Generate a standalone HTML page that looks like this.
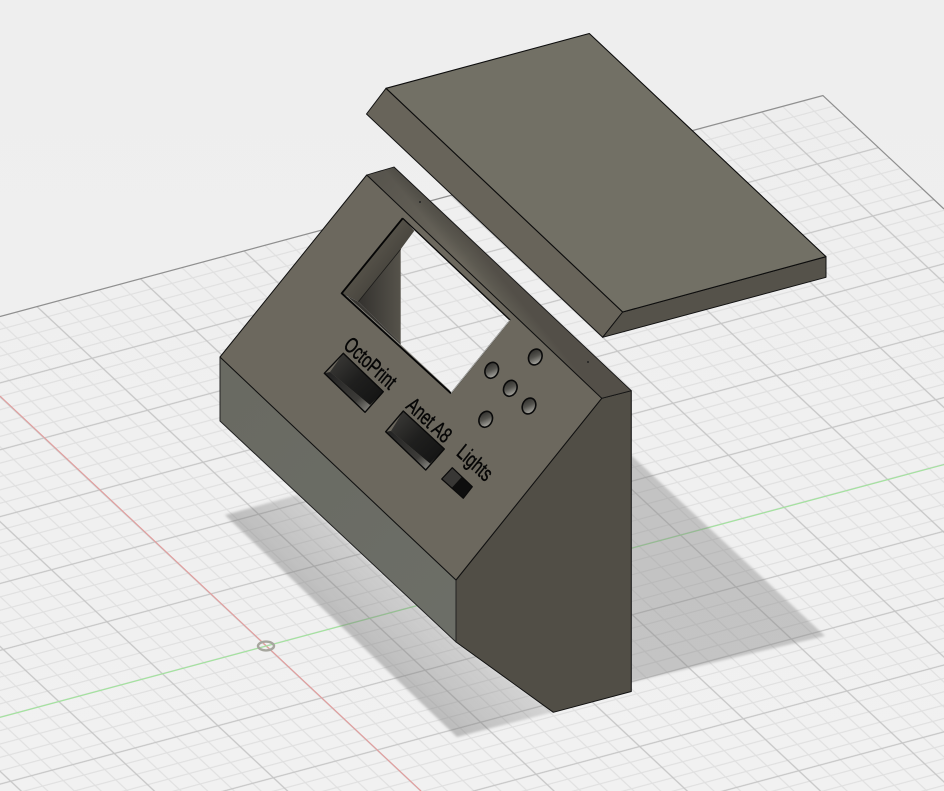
<!DOCTYPE html>
<html>
<head>
<meta charset="utf-8">
<style>
html,body{margin:0;padding:0;background:#efefef;width:944px;height:791px;overflow:hidden}
svg{display:block}
text{font-family:"Liberation Sans",sans-serif;font-size:16px;fill:#060606;stroke:#060606;stroke-width:.35px}
</style>
</head>
<body>
<svg width="944" height="791" viewBox="0 0 944 791" xmlns="http://www.w3.org/2000/svg">
<defs>
<linearGradient id="bg" x1="0" y1="0" x2="0" y2="1"><stop offset="0" stop-color="#eeeeee"/><stop offset="1" stop-color="#f1f1f1"/></linearGradient>
<pattern id="grid" patternUnits="userSpaceOnUse" width="100" height="100" patternTransform="matrix(1.036 -.2775 -.555 -.52 266 646)">
<g fill="#e0e0e0">
<rect x="19.35" y="0" width="1.3" height="100"/><rect x="39.35" y="0" width="1.3" height="100"/><rect x="59.35" y="0" width="1.3" height="100"/><rect x="79.35" y="0" width="1.3" height="100"/>
<rect x="0" y="19.1" width="100" height="1.8"/><rect x="0" y="39.1" width="100" height="1.8"/><rect x="0" y="59.1" width="100" height="1.8"/><rect x="0" y="79.1" width="100" height="1.8"/>
</g>
<g fill="#c6c6c6">
<rect x="0" y="0" width=".7" height="100"/><rect x="99.3" y="0" width=".7" height="100"/>
<rect x="0" y="0" width="100" height=".95"/><rect x="0" y="99.05" width="100" height=".95"/>
</g>
</pattern>
<linearGradient id="shL" gradientUnits="userSpaceOnUse" x1="335" y1="625" x2="405" y2="550"><stop offset="0" stop-color="#777" stop-opacity=".44"/><stop offset="1" stop-color="#777" stop-opacity=".2"/></linearGradient>
<filter id="bl" x="-5%" y="-5%" width="110%" height="110%"><feGaussianBlur stdDeviation="1.4"/></filter>
<linearGradient id="strip" gradientUnits="userSpaceOnUse" x1="480" y1="286" x2="497" y2="272"><stop offset="0" stop-color="#6a665c"/><stop offset=".45" stop-color="#5d5a51"/><stop offset="1" stop-color="#534f48"/></linearGradient>
<linearGradient id="stripL" gradientUnits="userSpaceOnUse" x1="385" y1="172" x2="470" y2="255"><stop offset="0" stop-color="#222" stop-opacity=".25"/><stop offset="1" stop-color="#222" stop-opacity="0"/></linearGradient>
<linearGradient id="wall" gradientUnits="userSpaceOnUse" x1="360" y1="250" x2="385" y2="270"><stop offset="0" stop-color="#5c584e"/><stop offset="1" stop-color="#49463f"/></linearGradient>
<linearGradient id="tri" gradientUnits="userSpaceOnUse" x1="358" y1="300" x2="401" y2="300"><stop offset="0" stop-color="#33312e"/><stop offset="1" stop-color="#56534b"/></linearGradient>
<linearGradient id="rock" x1="0" y1="0" x2="1" y2="1"><stop offset="0" stop-color="#3e3d3a"/><stop offset=".5" stop-color="#1f1f1e"/><stop offset="1" stop-color="#121212"/></linearGradient>
<linearGradient id="wedge" x1="0" y1="0" x2="1" y2="1"><stop offset="0" stop-color="#222"/><stop offset=".7" stop-color="#3c3b38"/><stop offset="1" stop-color="#8f8e88"/></linearGradient>
<linearGradient id="hole" x1="0.1" y1="0.1" x2="0.8" y2="0.9"><stop offset="0" stop-color="#2d2c29"/><stop offset=".5" stop-color="#55544f"/><stop offset="1" stop-color="#aaa9a3"/></linearGradient>
<linearGradient id="lowf" gradientUnits="userSpaceOnUse" x1="220" y1="390" x2="456" y2="610"><stop offset="0" stop-color="#696a62"/><stop offset="1" stop-color="#6c6e67"/></linearGradient>
</defs>

<rect width="944" height="791" fill="url(#bg)"/>

<polygon points="0,316.5 822.9,95.5 944,209 944,791 0,791" fill="url(#grid)"/>
<line x1="0" y1="396" x2="421" y2="791" stroke="#e39c9c" stroke-width="1.1"/>
<line x1="0" y1="717.3" x2="944" y2="464.6" stroke="#a2e59d" stroke-width="1.1"/>
<polyline points="0,316.5 822.9,95.5 944,209" fill="none" stroke="#8f8f8f" stroke-width="1.2"/>

<!-- shadows -->
<g filter="url(#bl)">
<polygon points="225,515 297,495 456,642 553,712 457,737" fill="url(#shL)"/>
<polygon points="631,455 825,636 631,682 560,700" fill="#808080" fill-opacity=".4"/>
</g>

<!-- origin marker -->
<ellipse cx="266" cy="646" rx="8" ry="4.4" fill="none" stroke="#a6a69e" stroke-width="2.4"/>

<!-- LID -->
<polygon points="366.5,114 386,88.3 622.7,312 602.7,337.3" fill="#68645a" stroke="#111" stroke-width="1" stroke-linejoin="round"/>
<polygon points="602.7,337.3 622.7,312 826,256.7 826,277.3" fill="#55524a" stroke="#111" stroke-width="1" stroke-linejoin="round"/>
<polygon points="386,88.3 589.3,33.5 826,256.7 622.7,312" fill="#727065" stroke="#0d0d0d" stroke-width="1.1" stroke-linejoin="round"/>

<!-- BOX side and lower front -->
<polygon points="601.7,398.3 631.3,390.7 631.3,691.5 553.3,712.3 456,642 456,580" fill="#514e46" stroke="#111" stroke-width="1" stroke-linejoin="round"/>
<polygon points="220,357 456,580 456,642 220,421" fill="url(#lowf)" stroke="#222" stroke-width="1" stroke-linejoin="round"/>

<!-- top strip -->
<polygon points="366.7,175 394,167 631.3,390.7 601.7,398.3" fill="url(#strip)"/>
<polygon points="366.7,175 394,167 631.3,390.7 601.7,398.3" fill="url(#stripL)" stroke="#151515" stroke-width=".9" stroke-linejoin="round"/>
<circle cx="420" cy="202" r="1" fill="#222"/>
<circle cx="588" cy="362" r="1" fill="#222"/>

<!-- slanted face with window hole -->
<path fill-rule="evenodd" d="M220,357L366.7,175L601.7,398.3L456,580ZM341.7,293.3L402.7,218.3L510,320L451,393.3Z" fill="#6c685e" stroke="#111" stroke-width="1" stroke-linejoin="round"/>

<!-- window interior -->
<polygon points="402.7,218.3 414.3,230.7 400.7,249.3 358.3,301.7 341.7,293.3" fill="url(#wall)"/>
<polygon points="400.7,249.3 400.7,343.3 358.3,301.7" fill="url(#tri)"/>
<polygon points="341.7,293.3 358.3,301.7 400.7,343.3 400.7,348 346,298" fill="#3a3834"/>
<line x1="358.3" y1="301.7" x2="400.7" y2="249.3" stroke="#1c1b19" stroke-width=".8"/>
<polygon points="344,295.5 451,393.3 449.5,390 400.7,344.5 347,296" fill="#8a8880"/>
<polyline points="451,393.3 341.7,293.3 402.7,218.3" fill="none" stroke="#060606" stroke-width="1.9" stroke-linejoin="round"/>
<line x1="402.7" y1="218.3" x2="510" y2="320" stroke="#0a0a0a" stroke-width="1.3"/>
<line x1="451" y1="393.3" x2="510" y2="320" stroke="#d5d5d0" stroke-width=".6"/>

<!-- holes -->
<g stroke="#0a0a0a" stroke-width="1.6" fill="url(#hole)">
<ellipse cx="535.3" cy="357" rx="6.5" ry="8.2" transform="rotate(24 535.3 357)"/>
<ellipse cx="491.7" cy="370.3" rx="6.5" ry="8.2" transform="rotate(24 491.7 370.3)"/>
<ellipse cx="510.3" cy="388.3" rx="6.5" ry="8.2" transform="rotate(24 510.3 388.3)"/>
<ellipse cx="529" cy="406" rx="6.5" ry="8.2" transform="rotate(24 529 406)"/>
<ellipse cx="485.7" cy="419.3" rx="6.5" ry="8.2" transform="rotate(24 485.7 419.3)"/>
</g>

<!-- rocker OctoPrint -->
<polygon points="343.3,353.3 383.3,391.7 370,405 330,372" fill="url(#rock)"/>
<polygon points="324.3,373.3 330,372 370,405 365,412.3" fill="url(#wedge)"/>
<polygon points="343.3,353.3 324.3,373.3 365,412.3 383.3,391.7" fill="none" stroke="#0a0a0a" stroke-width="1.4" stroke-linejoin="round"/>

<!-- rocker Anet -->
<polygon points="403.3,411 444.3,449 430,463.5 391,431" fill="url(#rock)"/>
<polygon points="385.7,431.7 391,431 430,463.5 425.7,470" fill="url(#wedge)"/>
<polygon points="403.3,411 385.7,431.7 425.7,470 444.3,449" fill="none" stroke="#0a0a0a" stroke-width="1.4" stroke-linejoin="round"/>

<!-- rocker Lights -->
<polygon points="452.3,467.7 441.7,479 451.5,488 462,476.5" fill="#383735"/>
<polygon points="462,476.5 451.5,488 463.3,498.3 472.3,486.7" fill="#0e0e0e"/>
<polygon points="452.3,467.7 441.7,479 463.3,498.3 472.3,486.7" fill="none" stroke="#0a0a0a" stroke-width="1.2" stroke-linejoin="round"/>

<!-- labels -->
<text transform="matrix(.7 .652 -.85 1.05 342.5 347)">OctoPrint</text>
<text transform="matrix(.7 .652 -.85 1.05 405 407.5)">Anet A8</text>
<text transform="matrix(.7 .652 -.85 1.05 455.5 454.5)">Lights</text>
</svg>
</body>
</html>
